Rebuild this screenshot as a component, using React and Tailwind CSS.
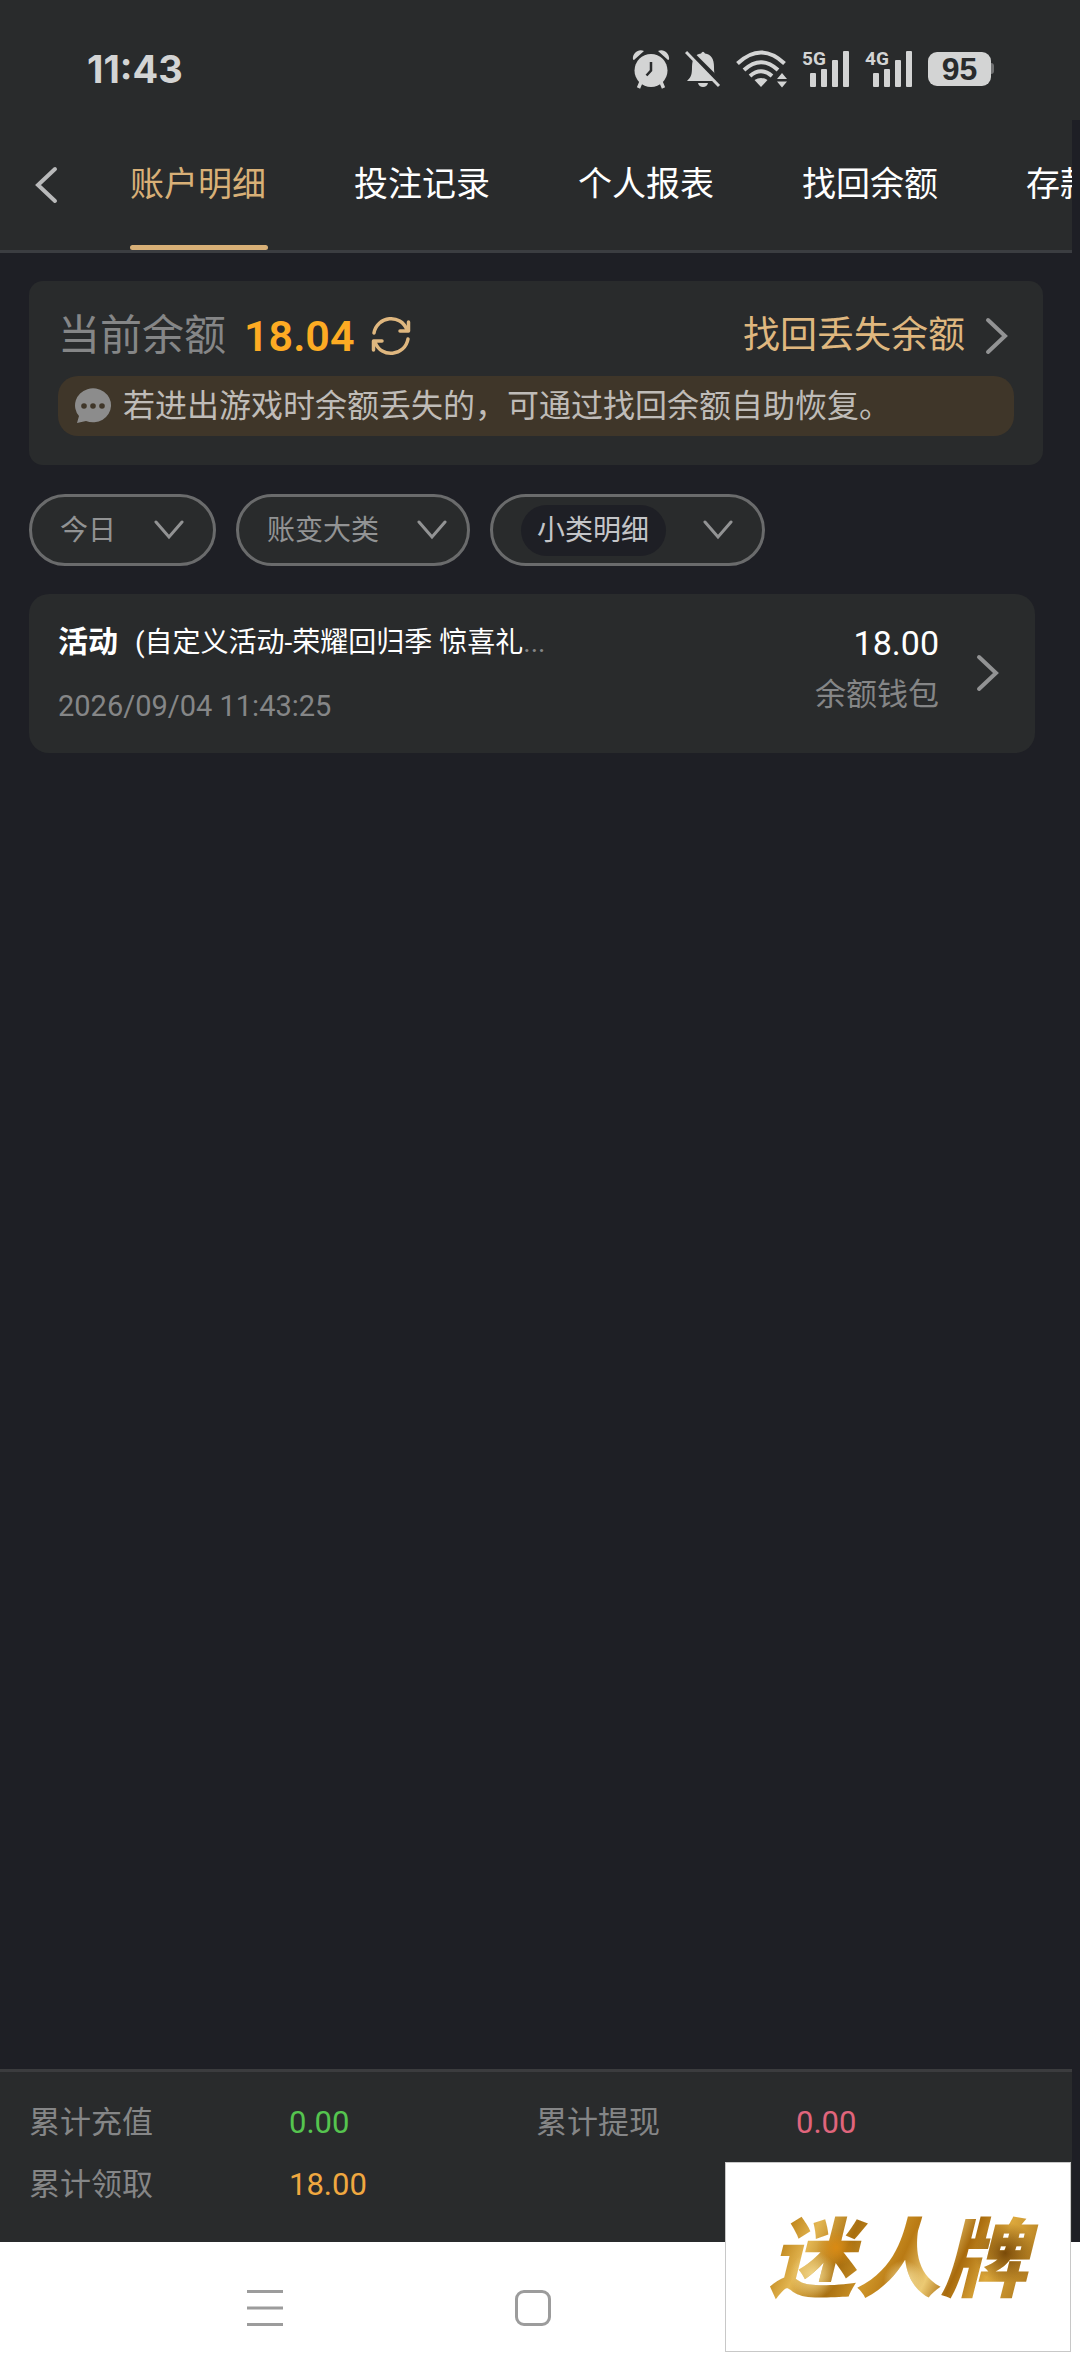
const CJK = "font-['Roboto','Noto_Sans_CJK_SC',sans-serif]";

function StatusBar() {
  return (
    <div className="flex h-[120px] items-center bg-[#292b2c] pt-[17px] pr-[86px] pl-[87px] text-[#d3d4d4]">
      <time className="font-['Inter',sans-serif] text-[38px] leading-none font-bold">11:43</time>
      <div className="ml-auto flex items-center">
        <svg className="mr-[15px]" width="38" height="40" viewBox="0 0 38 40" fill="currentColor" aria-label="alarm">
          <path d="M1 10.500C0 5 6-1 12 2L2 11ZM37 10.500C38 5 32-1 26 2L36 11Z" />
          <circle cx="19" cy="21.500" r="16.500" />
          <path d="M9 33L6.500 39M29 33L31.500 39" stroke="currentColor" strokeWidth="3.500" />
          <path d="M19 13V21.500L14.500 26.500" fill="none" stroke="#292b2c" strokeWidth="2.500" />
        </svg>
        <svg className="mr-[15px]" width="36" height="38" viewBox="0 0 36 38" fill="currentColor" aria-label="muted">
          <path d="M2 31C6 27 7 25 7 17C7 9 10 4 16 3.500Q18 0 20 3.500C26 4 29 9 29 17C29 25 30 27 34 31Z" />
          <path d="M13 33H23Q22 37 18 37T13 33Z" />
          <path d="M3 0L37 34" stroke="#292b2c" strokeWidth="5" />
          <path d="M1 2L34 36" stroke="currentColor" strokeWidth="3" />
        </svg>
        <svg className="mr-[14px]" width="52" height="38" viewBox="0 0 52 38" fill="none" stroke="currentColor" strokeWidth="4" aria-label="wifi">
          <path d="M1.500 13.500Q25 -8.500 48.500 13.500M8 20Q25 4.500 42 20M14 26Q25 16.500 36 26" />
          <path d="M25 37L18.500 30Q25 26 31.500 30ZM46 23L51 29H41ZM46 37.500L41 31.500H51Z" fill="currentColor" stroke="none" />
        </svg>
        {["5G", "4G"].map((name) => (
          <div key={name} className="relative mr-[15px] h-[38px] w-12">
            <span className="absolute -top-[1px] left-0 font-['Roboto',sans-serif] text-[19px] leading-none font-bold">{name}</span>
            <svg width="48" height="38" viewBox="0 0 48 38" fill="currentColor" aria-label="signal">
              <rect x="8" y="23" width="6" height="14" rx="1" />
              <rect x="19" y="19" width="6" height="18" rx="1" />
              <rect x="30" y="10" width="6" height="27" rx="1" />
              <rect x="41" y="1" width="6" height="36" rx="1" />
            </svg>
          </div>
        ))}
        <div className="flex items-center">
          <span className="flex h-[34px] w-[63px] items-center justify-center rounded-[9px] bg-[#d3d4d4] font-['Liberation_Sans',sans-serif] text-[32px] leading-none font-bold text-[#292b2c]">95</span>
          <span className="h-[11px] w-[3px] rounded-r-sm bg-[#6f7071]" />
        </div>
      </div>
    </div>
  );
}

function Chevron({ className }) {
  return (
    <svg className={`h-[38px] w-[26px] ${className}`} viewBox="0 0 26 38" fill="none" stroke="currentColor" strokeWidth="4" strokeLinecap="round" aria-hidden="true">
      <path d="M4 3L21 19L4 35" />
    </svg>
  );
}

function Header() {
  const tabs = ["账户明细", "投注记录", "个人报表", "找回余额", "存款记录"];
  return (
    <header className="flex h-[133px] border-b-[3px] border-[#3b3d41] bg-[#292b2c]">
      <button type="button" aria-label="返回" className="flex w-[130px] shrink-0 items-center pl-[33px] text-[#b9babb]">
        <Chevron className="-scale-x-100" />
      </button>
      <nav className="flex min-w-0 flex-1 gap-[86px] overflow-hidden">
        {tabs.map((tab, i) => (
          <button
            key={tab}
            type="button"
            className={
              i === 0
                ? "flex w-[138px] shrink-0 flex-col justify-between text-left text-[34px] text-[#d8b077]"
                : "flex w-[138px] shrink-0 flex-col justify-between text-left text-[34px] text-white"
            }
          >
            <span className="pt-[38px] leading-[52px]">{tab}</span>
            {i === 0 && <span className="h-[5px] w-full rounded-full bg-[#d8b077]" />}
          </button>
        ))}
      </nav>
    </header>
  );
}

function BalanceCard() {
  return (
    <section className="mx-[29px] rounded-[14px] bg-[#292b2c] px-[29px] pt-[29px] pb-[29px]">
      <div className="flex h-[52px] items-center">
        <span className="text-[42px] leading-[52px] text-[#858687]">当前余额</span>
        <span className="ml-[18px] text-[43px] leading-[52px] font-semibold text-[#fdab23]">18.04</span>
        <button type="button" aria-label="刷新" className="ml-4 text-[#dfb77f]">
          <svg width="40" height="40" viewBox="0 0 40 40" fill="none" stroke="currentColor" strokeWidth="3.500" strokeLinecap="round" aria-hidden="true">
            <path d="M3 17C6 0 30-3 36 14M37 23C34 40 10 43 4 26" />
            <path d="M37.500 6V15H29M2.500 34V25H11" strokeLinejoin="round" />
          </svg>
        </button>
        <a href="#recover" className="ml-auto flex items-center text-[37px] leading-[52px] text-[#dfb77f]">
          找回丢失余额
          <Chevron className="mr-1 ml-[19px] text-[#929394]" />
        </a>
      </div>
      <p className="mt-[14px] flex h-[60px] items-center rounded-[20px] bg-[#3f3629] pl-4 text-[32px] whitespace-nowrap text-[#bfbcb8]">
        <svg className="mr-[11px] shrink-0" width="38" height="36" viewBox="0 0 38 36" aria-hidden="true">
          <path d="M3 35L5 28A18 17 0 1 1 12 33Z" fill="#8c8c8c" />
          <g fill="#3f3629">
            <circle cx="10" cy="18" r="2.800" />
            <circle cx="19" cy="18" r="2.800" />
            <circle cx="28" cy="18" r="2.800" />
          </g>
        </svg>
        若进出游戏时余额丢失的，可通过找回余额自助恢复。
      </p>
    </section>
  );
}

function Filter({ id, label, className, selectClass }) {
  return (
    <label htmlFor={id} className={`flex h-[72px] items-center rounded-full border-[3px] border-[#6a6b6c] bg-[#292b2c] ${className}`}>
      <select id={id} aria-label={label} className={`appearance-none text-[28px] leading-[51px] outline-none ${selectClass}`}>
        <option>{label}</option>
      </select>
      <svg className="ml-[37px]" width="30" height="20" viewBox="0 0 30 20" fill="none" stroke="#929394" strokeWidth="3" strokeLinecap="round" aria-hidden="true">
        <path d="M2 2L15 17L28 2" />
      </svg>
    </label>
  );
}

function Record() {
  return (
    <a href="#record" className="mr-[37px] ml-[29px] flex rounded-[20px] bg-[#292b2c] pt-[24px] pr-[34px] pb-[22px] pl-[29px]">
      <div className="flex flex-col justify-between">
        <div className="text-[28px] leading-[48px] whitespace-nowrap text-white">
          <b className="mr-[17px] text-[30px]">活动</b>(自定义活动-荣耀回归季 惊喜礼<span className="text-[#858687]">...</span>
        </div>
        <time className="text-[29px] leading-[50px] text-[#858687]">2026/09/04 11:43:25</time>
      </div>
      <div className="ml-auto flex flex-col pb-[9px] text-right">
        <span className="text-[34px] leading-[50px] text-white">18.00</span>
        <span className="text-[31px] leading-[54px] text-[#858687]">余额钱包</span>
      </div>
      <Chevron className="mt-9 ml-9 self-start text-[#929394]" />
    </a>
  );
}

function Totals() {
  const rows = [
    ["累计充值", "0.00", "text-[#55c44f]"],
    ["累计提现", "0.00", "text-[#e0657c]"],
    ["累计领取", "18.00", "text-[#f0a840]"],
  ];
  return (
    <footer className="border-t-[3px] border-[#3b3c3e] bg-[#292b2c] px-[29px] pt-5 pb-[26px]">
      <dl className="grid grid-cols-2 text-[31px] leading-[62px]">
        {rows.map(([name, value, color]) => (
          <div key={name} className="flex">
            <dt className="w-[260px] text-[#858687]">{name}</dt>
            <dd className={color}>{value}</dd>
          </div>
        ))}
      </dl>
    </footer>
  );
}

function SystemNav() {
  return (
    <nav className="flex h-[132px] items-center gap-[232px] bg-white pl-[247px] text-[#9c9c9c]">
      <button type="button" aria-label="菜单">
        <svg width="36" height="38" viewBox="0 0 36 38" stroke="currentColor" strokeWidth="3" aria-hidden="true">
          <path d="M0 2.500H36M0 19H36M0 35.500H36" />
        </svg>
      </button>
      <button type="button" aria-label="主页" className="h-9 w-9 rounded-[9px] border-[3px] border-[#9c9c9c]" />
    </nav>
  );
}

export default function App() {
  return (
    <div className={`relative flex min-h-screen flex-col bg-[#1e1f25] ${CJK}`}>
      <StatusBar />
      <div className="mr-2 flex flex-1 flex-col">
        <Header />
        <main className="flex flex-1 flex-col gap-7 pt-7">
          <BalanceCard />
          <div className="mt-px ml-[29px] flex gap-5">
            <Filter id="day" label="今日" className="pr-[29px] pl-7" selectClass="text-[#929394]" />
            <Filter id="group" label="账变大类" className="pr-5 pl-7" selectClass="text-[#929394]" />
            <Filter id="kind" label="小类明细" className="pr-[29px] pl-7" selectClass="rounded-full bg-[#1e1f25] px-4 text-[#c4c5c8]" />
          </div>
          <Record />
        </main>
        <Totals />
      </div>
      <SystemNav />
      <div className="absolute right-[9px] bottom-[22px] flex h-[190px] w-[346px] items-center justify-center border border-[#c8c8c8] bg-white pb-2">
        <span className="bg-[radial-gradient(circle_at_28%_45%,#d98a14_0,transparent_9%),radial-gradient(circle_at_52%_75%,#f6e2a0_0,transparent_12%),radial-gradient(circle_at_88%_50%,#7a4a08_0,transparent_12%),radial-gradient(circle_at_20%_70%,#f3d98e_0,transparent_10%),linear-gradient(115deg,#8a5a0c,#b97d12_12%,#e3b652_22%,#a86f10_34%,#cf962a_44%,#b97a14_52%,#ecca74_62%,#a86a0c_70%,#dca83c_80%,#9a6410)] bg-clip-text px-3 font-['Noto_Sans_CJK_SC',sans-serif] text-[86px] leading-[110px] font-black text-transparent italic">迷人牌</span>
      </div>
    </div>
  );
}
